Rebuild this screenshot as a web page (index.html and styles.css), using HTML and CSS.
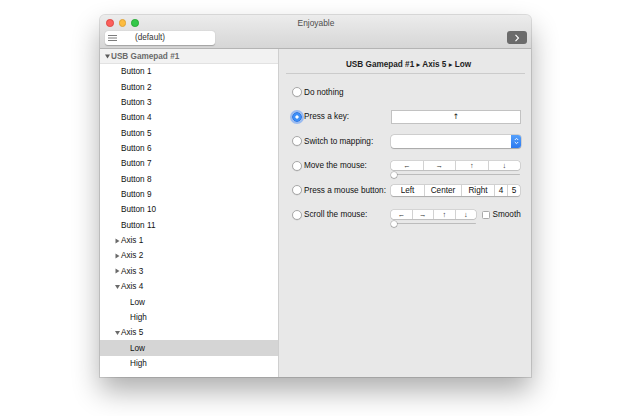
FILE: index.html
```html
<!DOCTYPE html>
<html lang="en">
<head>
    <meta name="viewport" content="width=device-width, initial-scale=1.0">
    <title>Enjoyable</title>
    <link rel="stylesheet" href="styles.css">
</head>
<body>
    <div class="window">
        <div class="titlebar">
            <div class="titlerow">
                <div class="lights">
                    <span class="light red"></span>
                    <span class="light yellow"></span>
                    <span class="light green"></span>
                </div>
                <div class="title">Enjoyable</div>
            </div>
            <div class="toolrow">
                <div class="mapping-btn">
                    <svg class="menu-icon" width="9" height="6" viewBox="0 0 9 6">
                        <path d="M0 0.5H9M0 3H9M0 5.5H9" stroke="#6d6d6d" stroke-width="0.9"/>
                    </svg>
                    <span>(default)</span>
                </div>
                <div class="next-btn">
                    <svg width="6" height="8" viewBox="0 0 6 8">
                        <path d="M1.5 0.8L4.5 4L1.5 7.2" fill="none" stroke="#fff" stroke-width="1.1"/>
                    </svg>
                </div>
            </div>
        </div>
        <div class="main">
            <div class="sidebar">
                <div class="group">
                    <svg class="tri-down" width="5" height="5" viewBox="0 0 5 5"><path d="M0 0.5H5L2.5 4.5Z" fill="#5a5a5a"/></svg>USB Gamepad #1
                </div>
                <div class="row lvl1">Button 1</div>
                <div class="row lvl1">Button 2</div>
                <div class="row lvl1">Button 3</div>
                <div class="row lvl1">Button 4</div>
                <div class="row lvl1">Button 5</div>
                <div class="row lvl1">Button 6</div>
                <div class="row lvl1">Button 7</div>
                <div class="row lvl1">Button 8</div>
                <div class="row lvl1">Button 9</div>
                <div class="row lvl1">Button 10</div>
                <div class="row lvl1">Button 11</div>
                <div class="row lvl1"><svg class="tri" width="6" height="6" viewBox="0 0 6 6"><path d="M0.5 0.5L4.5 3L0.5 5.5Z" fill="#6a6a6a"/></svg>Axis 1</div>
                <div class="row lvl1"><svg class="tri" width="6" height="6" viewBox="0 0 6 6"><path d="M0.5 0.5L4.5 3L0.5 5.5Z" fill="#6a6a6a"/></svg>Axis 2</div>
                <div class="row lvl1"><svg class="tri" width="6" height="6" viewBox="0 0 6 6"><path d="M0.5 0.5L4.5 3L0.5 5.5Z" fill="#6a6a6a"/></svg>Axis 3</div>
                <div class="row lvl1"><svg class="tri" width="6" height="6" viewBox="0 0 6 6"><path d="M0 1H5L2.5 5Z" fill="#6a6a6a"/></svg>Axis 4</div>
                <div class="row lvl2">Low</div>
                <div class="row lvl2">High</div>
                <div class="row lvl1"><svg class="tri" width="6" height="6" viewBox="0 0 6 6"><path d="M0 1H5L2.5 5Z" fill="#6a6a6a"/></svg>Axis 5</div>
                <div class="row lvl2 selected">Low</div>
                <div class="row lvl2">High</div>
            </div>
            <div class="content">
                <div class="heading">USB Gamepad #1 <span class="sep">▸</span> Axis 5 <span class="sep">▸</span> Low</div>
                <div class="options">
                    <div class="option">
                        <span class="radio"></span>
                        <span class="label">Do nothing</span>
                    </div>
                    <div class="option">
                        <span class="radio on"></span>
                        <span class="label">Press a key:</span>
                        <div class="keyfield">↑</div>
                    </div>
                    <div class="option">
                        <span class="radio"></span>
                        <span class="label">Switch to mapping:</span>
                        <div class="popup">
                            <span class="stepper">
                                <svg width="5" height="8" viewBox="0 0 5 8">
                                    <path d="M0.8 3L2.5 1.3L4.2 3M0.8 5L2.5 6.7L4.2 5" fill="none" stroke="#fff" stroke-width="0.9"/>
                                </svg>
                            </span>
                        </div>
                    </div>
                    <div class="option">
                        <span class="radio"></span>
                        <span class="label">Move the mouse:</span>
                        <div class="control">
                            <div class="segmented small">
                                <span>←</span><span>→</span><span>↑</span><span>↓</span>
                            </div>
                            <div class="slider"><span class="knob"></span></div>
                        </div>
                    </div>
                    <div class="option">
                        <span class="radio"></span>
                        <span class="label">Press a mouse button:</span>
                        <div class="segmented buttons">
                            <span class="w33">Left</span><span class="w37">Center</span><span class="w33">Right</span><span class="w13">4</span><span class="w13">5</span>
                        </div>
                    </div>
                    <div class="option">
                        <span class="radio"></span>
                        <span class="label">Scroll the mouse:</span>
                        <div class="control narrow">
                            <div class="segmented small">
                                <span>←</span><span>→</span><span>↑</span><span>↓</span>
                            </div>
                            <div class="slider"><span class="knob"></span></div>
                        </div>
                        <span class="check"></span>
                        <span class="check-label">Smooth</span>
                    </div>
                </div>
            </div>
        </div>
    </div>
</body>
</html>
```

FILE: styles.css
```css
*{
    margin: 0;
    padding: 0;
    box-sizing: border-box;
    font-family: "Liberation Sans", Arial, sans-serif;
}
body{
    background: #fff;
    width: 623px;
    height: 416px;
    overflow: hidden;
}
.window{
    width: 431px;
    height: 362px;
    margin: 15px 0 0 100px;
    border-radius: 5px 5px 0 0;
    display: flex;
    flex-direction: column;
    background: #e8e8e8;
    box-shadow: 0 0 0 1px rgba(0,0,0,0.12), 0 14px 28px rgba(0,0,0,0.32);
    overflow: hidden;
    font-size: 8.2px;
    color: #111;
}
.titlebar{
    height: 34px;
    background: linear-gradient(#ececec, #d6d6d6);
    border-bottom: 1px solid #b4b4b4;
    padding: 0 4px 0 5px;
}
.titlerow{
    height: 14px;
    display: flex;
    align-items: center;
    position: relative;
}
.lights{
    display: flex;
    gap: 5px;
    padding-left: 1px;
    padding-top: 2px;
}
.light{
    width: 7.5px;
    height: 7.5px;
    border-radius: 50%;
}
.red{ background: #fc605c; border: 0.5px solid #de4a45; }
.yellow{ background: #fdbc40; border: 0.5px solid #dea236; }
.green{ background: #34c84a; border: 0.5px solid #27aa35; }
.title{
    position: absolute;
    left: 0;
    right: 0;
    top: 3px;
    text-align: center;
    color: #4d4d4d;
    font-size: 8.4px;
}
.toolrow{
    display: flex;
    justify-content: space-between;
    align-items: center;
    margin-top: 1px;
    height: 15px;
}
.mapping-btn{
    width: 110px;
    height: 14px;
    background: #fff;
    border-radius: 3px;
    box-shadow: 0 0.5px 1px rgba(0,0,0,0.25);
    display: flex;
    align-items: center;
    padding-left: 3px;
    color: #333;
}
.mapping-btn span{
    flex: 1;
    text-align: center;
    padding-right: 32px;
}
.next-btn{
    width: 20px;
    height: 13px;
    background: #6b6b6b;
    border-radius: 3px;
    display: flex;
    align-items: center;
    justify-content: center;
}
.main{
    flex: 1;
    display: flex;
}
.sidebar{
    width: 179px;
    background: #fff;
    border-right: 1px solid #cfcfcf;
}
.group{
    height: 15px;
    background: #f2f2f2;
    border-bottom: 1px solid #e2e2e2;
    color: #6a6a6a;
    font-weight: bold;
    display: flex;
    align-items: center;
    padding-left: 5px;
}
.tri-down{
    margin-right: 1px;
}
.tri{
    margin-left: -6px;
}
.row{
    height: 15.37px;
    display: flex;
    align-items: center;
}
.lvl1{ padding-left: 21px; }
.lvl2{ padding-left: 30px; }
.selected{ background: #d5d5d5; }
.content{
    flex: 1;
    padding: 0 6px 0 13px;
}
.heading{
    font-weight: bold;
    text-align: center;
    padding: 11px 0 4px 6px;
    border-bottom: 1px solid #cbcbcb;
    margin-left: -6px;
    color: #1e1e1e;
}
.sep{
    font-family: "DejaVu Sans", sans-serif;
    font-size: 7.5px;
    font-weight: normal;
    position: relative;
    top: -0.5px;
}
.options{
    padding-top: 6px;
}
.option{
    height: 24.5px;
    display: flex;
    align-items: center;
}
.radio{
    width: 10px;
    height: 10px;
    border-radius: 50%;
    background: #fff;
    border: 0.5px solid #a8a8a8;
    box-shadow: 0 0.5px 0.5px rgba(0,0,0,0.12);
    flex-shrink: 0;
}
.radio.on{
    background: radial-gradient(circle, #fff 0 1.4px, #3f90f7 1.8px);
    border-color: #2a76e6;
    box-shadow: 0 0 0 2px rgba(90,150,245,0.55);
}
.label{
    width: 89px;
    padding-left: 2px;
    flex-shrink: 0;
}
.keyfield{
    width: 130px;
    height: 13.5px;
    background: #fff;
    border: 0.5px solid #c2c2c2;
    text-align: center;
    line-height: 12px;
    font-family: "DejaVu Sans", sans-serif;
    font-size: 7.5px;
}
.popup{
    width: 130px;
    height: 12.5px;
    background: #fff;
    border-radius: 3px;
    box-shadow: 0 0 0 0.5px rgba(0,0,0,0.18), 0 0.5px 1px rgba(0,0,0,0.2);
    display: flex;
    justify-content: flex-end;
}
.stepper{
    width: 10px;
    height: 100%;
    background: linear-gradient(#55a0fb, #2b79f0);
    border-radius: 0 3px 3px 0;
    display: flex;
    align-items: center;
    justify-content: center;
}
.control{
    width: 129px;
    height: 9px;
}
.control.narrow{
    width: 85px;
}
.segmented{
    display: flex;
    background: #fff;
    border-radius: 2.5px;
    box-shadow: 0 0 0 0.5px rgba(0,0,0,0.16), 0 0.5px 1px rgba(0,0,0,0.2);
}
.segmented span{
    flex: 1;
    text-align: center;
    border-left: 0.5px solid #d2d2d2;
}
.segmented span:first-child{
    border-left: 0;
}
.segmented.small{
    height: 9px;
    font-family: "DejaVu Sans", sans-serif;
    font-size: 7.5px;
    line-height: 9px;
    color: #333;
}
.segmented.buttons{
    width: 129px;
    height: 11px;
    line-height: 11px;
}
.segmented.buttons span{ flex: none; }
.w33{ width: 33px; }
.w37{ width: 37px; }
.w13{ width: 13px; }
.slider{
    margin-top: 3.5px;
    height: 1.5px;
    background: #bcbcbc;
    border-radius: 1px;
    display: flex;
    align-items: center;
}
.knob{
    width: 6px;
    height: 6px;
    border-radius: 50%;
    background: #fff;
    box-shadow: 0 0 0 0.5px rgba(0,0,0,0.25), 0 0.5px 1px rgba(0,0,0,0.3);
}
.check{
    width: 7.5px;
    height: 7.5px;
    background: #fff;
    border: 0.5px solid #a9a9a9;
    border-radius: 1.5px;
    margin-left: 6px;
}
.check-label{
    margin-left: 3px;
}
```
